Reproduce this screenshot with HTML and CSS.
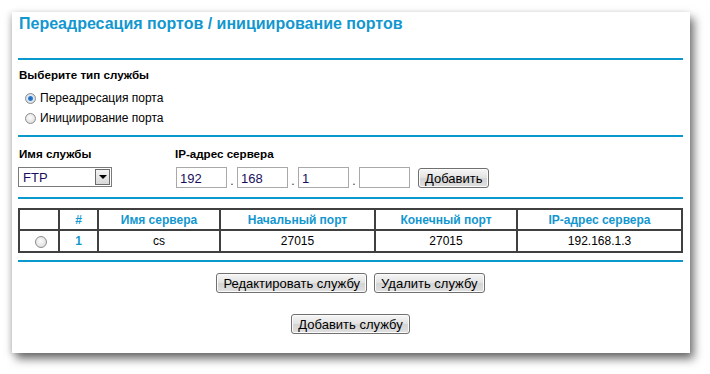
FILE: index.html
```html
<!DOCTYPE html>
<html lang="ru">
<head>
  <meta charset="UTF-8">
  <title>Переадресация портов</title>
  <link rel="stylesheet" href="styles.css">
</head>
<body>
  <div class="panel">
    <h1 class="title">Переадресация портов / инициирование портов</h1>
    <div class="rule"></div>

    <div class="section type-section">
      <div class="label">Выберите тип службы</div>
      <label class="radio-row"><input type="radio" name="type" checked> Переадресация порта</label>
      <label class="radio-row"><input type="radio" name="type"> Инициирование порта</label>
    </div>
    <div class="rule"></div>

    <div class="section service-section">
      <div class="field service-field">
        <div class="label">Имя службы</div>
        <div class="select-box">
          <span class="select-value">FTP</span>
          <span class="select-arrow"></span>
        </div>
      </div>
      <div class="field">
        <div class="label">IP-адрес сервера</div>
        <div class="ip-row">
          <input class="ip-part" type="text" value="192">
          <span class="dot">.</span>
          <input class="ip-part" type="text" value="168">
          <span class="dot">.</span>
          <input class="ip-part" type="text" value="1">
          <span class="dot">.</span>
          <input class="ip-part" type="text" value="">
          <button class="btn add-btn">Добавить</button>
        </div>
      </div>
    </div>
    <div class="rule"></div>

    <div class="section table-section">
      <table class="ports">
        <tr>
          <th class="col-sel"></th>
          <th class="col-num">#</th>
          <th class="col-name">Имя сервера</th>
          <th class="col-start">Начальный порт</th>
          <th class="col-end">Конечный порт</th>
          <th>IP-адрес сервера</th>
        </tr>
        <tr>
          <td><input type="radio" name="row"></td>
          <td class="num">1</td>
          <td>cs</td>
          <td>27015</td>
          <td>27015</td>
          <td>192.168.1.3</td>
        </tr>
      </table>
    </div>
    <div class="rule"></div>

    <div class="actions">
      <button class="btn">Редактировать службу</button>
      <button class="btn">Удалить службу</button>
    </div>
    <div class="actions add-row">
      <button class="btn">Добавить службу</button>
    </div>
  </div>
</body>
</html>
```

FILE: styles.css
```css
/* Общие стили */
html {
  height: 100%;
}

body {
  margin: 0;
  min-height: 100%;
  box-sizing: border-box;
  padding: 12px 0 0 12px;
  background: #ffffff;
  font-family: "Liberation Sans", Arial, sans-serif;
  font-size: 12px;
  color: #000;
}

.panel {
  width: 678px;
  height: 341px;
  box-sizing: border-box;
  padding: 0 7px 0 6px;
  background: #fff;
  box-shadow: 4px 6px 9px rgba(0, 0, 0, 0.55), -2px 1px 6px rgba(0, 0, 0, 0.15);
}

.title {
  margin: 0;
  height: 46px;
  padding: 3px 0 0 1px;
  box-sizing: border-box;
  font-size: 16px;
  line-height: 18px;
  font-weight: bold;
  color: #1297cf;
}

.rule {
  height: 2px;
  background: #0a99cc;
}

.label {
  font-weight: bold;
  font-size: 11.6px;
  padding-left: 1px;
  line-height: 14px;
}

/* Тип службы */
.type-section {
  height: 75px;
  padding-top: 8px;
  box-sizing: border-box;
}

.type-section .label {
  margin-bottom: 6px;
}

.radio-row {
  display: flex;
  align-items: center;
  height: 20px;
  padding-left: 7px;
  gap: 4px;
}

input[type="radio"] {
  appearance: none;
  margin: 0;
  width: 11px;
  height: 11px;
  border-radius: 50%;
  border: 1px solid #8d8d8d;
  background: radial-gradient(circle at 45% 40%, #fcfcfc, #d6d6d6);
}

input[type="radio"]:checked {
  background: radial-gradient(circle, #1d5fa8 0, #2f7fd0 2px, #dfe9f5 3px, #d0d0d0 6px);
}

/* Имя службы и IP */
.service-section {
  height: 60px;
  display: flex;
  gap: 62px;
  padding-top: 10px;
  box-sizing: border-box;
}

.field .label {
  margin-bottom: 6px;
}

.select-box {
  position: relative;
  width: 94px;
  height: 20px;
  margin-top: 1px;
  border: 1px solid #7a7a7a;
  box-sizing: border-box;
  display: flex;
  align-items: center;
  padding-left: 4px;
  font-size: 13px;
  color: #1a0f5c;
}

.select-arrow {
  position: absolute;
  right: 1px;
  top: 1px;
  width: 15px;
  height: 16px;
  box-sizing: border-box;
  border: 1px solid #6a6a6a;
  background: linear-gradient(#f4f4f4, #d8d8d8);
}

.select-arrow::after {
  content: "";
  position: absolute;
  left: 3px;
  top: 5px;
  border-left: 4px solid transparent;
  border-right: 4px solid transparent;
  border-top: 4px solid #000;
}

.ip-row {
  display: flex;
  align-items: flex-end;
  margin-left: 2px;
}

.ip-part {
  width: 51px;
  height: 21px;
  box-sizing: border-box;
  border: 1px solid #a9a9a9;
  padding: 2px 3px 0;
  font-family: "Liberation Sans", Arial, sans-serif;
  font-size: 13px;
  color: #1a0f5c;
  margin: 0;
}

.dot {
  width: 10px;
  text-align: center;
  font-size: 12px;
  line-height: 14px;
  color: #333;
}

.btn {
  height: 20px;
  padding: 0 6px;
  border: 1px solid #707070;
  border-radius: 3px;
  background: linear-gradient(#f6f6f6, #e2e2e2 50%, #d4d4d4 51%, #e0e0e0);
  font-family: "Liberation Sans", Arial, sans-serif;
  font-size: 13px;
  color: #000;
  box-shadow: inset 0 0 0 1px #fbfbfb;
  cursor: pointer;
}

.add-btn {
  margin-left: 8px;
  height: 20px;
}

/* Таблица */
.table-section {
  height: 61px;
  padding-top: 9px;
  box-sizing: border-box;
}

.ports {
  width: 100%;
  border-collapse: collapse;
  border: 2px solid #404040;
}

.ports th,
.ports td {
  border: 2px solid #404040;
  text-align: center;
  padding: 0;
}

.ports th {
  height: 19px;
  color: #1297cf;
  font-weight: bold;
}

.ports td {
  height: 20px;
}

.ports td input[type="radio"] {
  width: 12px;
  height: 12px;
  margin-top: 4px;
  margin-left: 3px;
}

.col-sel { width: 38px; }
.col-num { width: 37px; }
.col-name { width: 120px; }
.col-start { width: 153px; }
.col-end { width: 140px; }

.num {
  color: #1297cf;
  font-weight: bold;
}

/* Кнопки */
.actions {
  display: flex;
  justify-content: center;
  gap: 7px;
  margin-top: 11px;
}

.add-row {
  margin-top: 21px;
}
```
